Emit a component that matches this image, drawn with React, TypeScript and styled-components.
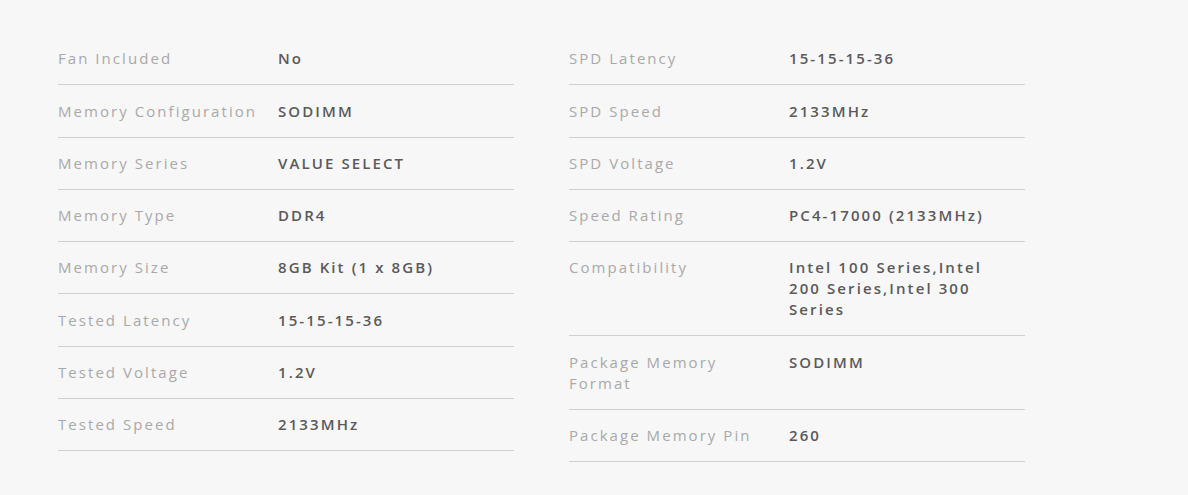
import React from "react";
import styled, { createGlobalStyle } from "styled-components";

const GlobalStyle = createGlobalStyle`
  html, body {
    margin: 0;
    padding: 0;
    background: #f7f7f7;
  }
  body {
    font-family: "Open Sans", "Liberation Sans", sans-serif;
  }
`;

const Page = styled.div`
  width: 1188px;
  height: 495px;
  background: #f7f7f7;
  box-sizing: border-box;
  padding: 33px 0 0 58px;
`;

const Columns = styled.div`
  display: grid;
  grid-template-columns: 456px 456px;
  column-gap: 55px;
  align-items: start;
`;

const SpecList = styled.dl`
  margin: 0;
  display: flex;
  flex-direction: column;
`;

const Row = styled.div`
  display: grid;
  grid-template-columns: 220px 1fr;
  padding: 15.3px 0 15px;
  border-bottom: 1px solid #cfcfcf;
`;

const Label = styled.dt`
  margin: 0;
  font-size: 15px;
  line-height: 21px;
  letter-spacing: 2.05px;
  color: #a9a9a9;
  font-weight: 400;
  padding-right: 8px;
`;

const Value = styled.dd`
  margin: 0;
  font-size: 15px;
  line-height: 21px;
  letter-spacing: 2.1px;
  color: #5a5a5a;
  font-weight: 600;
  max-width: 205px;
`;

type Spec = [string, string];

const left: Spec[] = [
  ["Fan Included", "No"],
  ["Memory Configuration", "SODIMM"],
  ["Memory Series", "VALUE SELECT"],
  ["Memory Type", "DDR4"],
  ["Memory Size", "8GB Kit (1 x 8GB)"],
  ["Tested Latency", "15-15-15-36"],
  ["Tested Voltage", "1.2V"],
  ["Tested Speed", "2133MHz"],
];

const right: Spec[] = [
  ["SPD Latency", "15-15-15-36"],
  ["SPD Speed", "2133MHz"],
  ["SPD Voltage", "1.2V"],
  ["Speed Rating", "PC4-17000 (2133MHz)"],
  ["Compatibility", "Intel 100 Series,Intel 200 Series,Intel 300 Series"],
  ["Package Memory Format", "SODIMM"],
  ["Package Memory Pin", "260"],
];

function SpecTable({ items }: { items: Spec[] }) {
  return (
    <SpecList>
      {items.map(([label, value]) => (
        <Row key={label}>
          <Label>{label}</Label>
          <Value>{value}</Value>
        </Row>
      ))}
    </SpecList>
  );
}

export default function App() {
  return (
    <>
      <GlobalStyle />
      <Page>
        <Columns>
          <SpecTable items={left} />
          <SpecTable items={right} />
        </Columns>
      </Page>
    </>
  );
}
